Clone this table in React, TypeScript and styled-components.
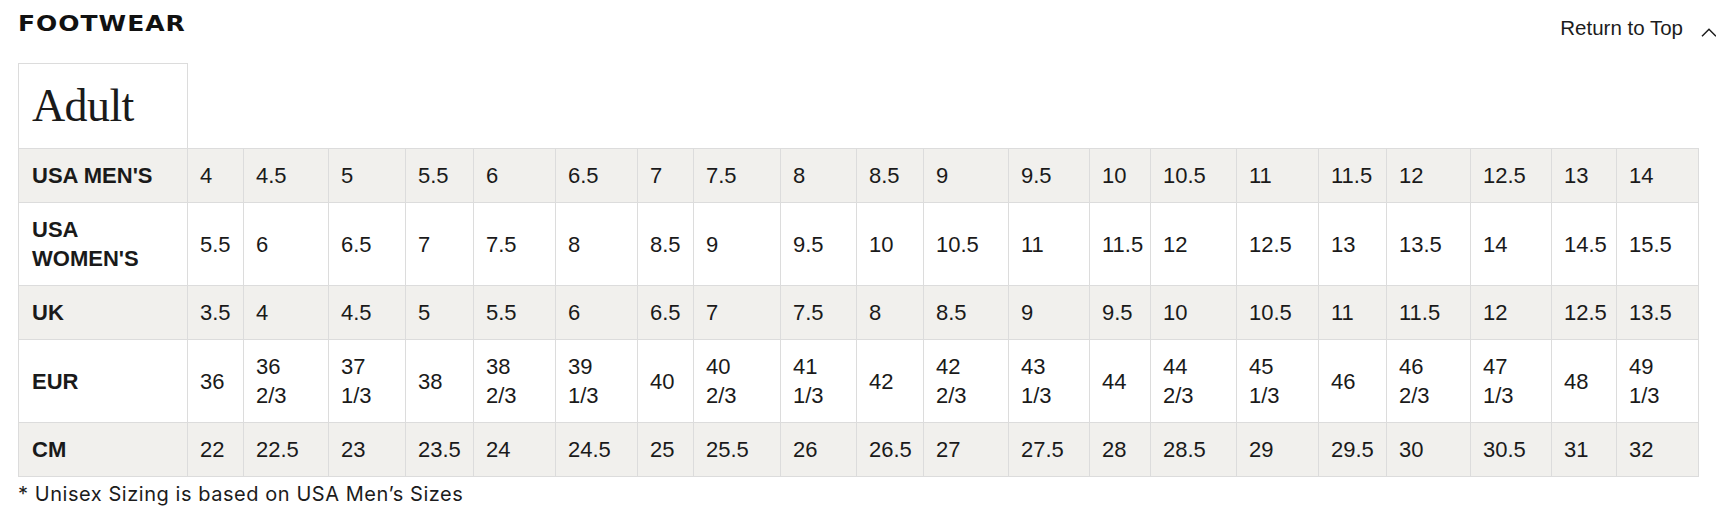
import React from "react";
import styled, { createGlobalStyle } from "styled-components";

const GlobalStyle = createGlobalStyle`
  html, body {
    margin: 0;
    padding: 0;
    background: #ffffff;
    color: #1c1c1c;
    font-family: "Liberation Sans", Arial, sans-serif;
  }
  * { box-sizing: border-box; }
`;

const Page = styled.section`
  padding: 0 18px;
  width: 1716px;
`;

const Header = styled.header`
  display: flex;
  justify-content: space-between;
  align-items: flex-start;
  padding-top: 12px;
  margin-right: -18px;
`;

const Title = styled.h2`
  margin: 0;
  font-family: "DejaVu Sans", sans-serif;
  font-weight: 700;
  font-size: 20.5px;
  line-height: 24px;
  letter-spacing: 0.8px;
  color: #111111;
  transform: scaleX(1.22);
  transform-origin: left center;
`;

const ReturnLink = styled.a`
  display: inline-flex;
  align-items: center;
  gap: 18px;
  margin-top: 4px;
  font-family: "Liberation Sans", Arial, sans-serif;
  font-size: 20.5px;
  line-height: 24px;
  color: #1c1c1c;
  text-decoration: none;
  cursor: pointer;
`;

const Chevron = styled.svg`
  display: block;
  width: 16px;
  height: 9px;
  margin-top: 9px;
  margin-right: -1px;
`;

const Table = styled.table`
  width: 1680px;
  margin-top: 23px;
  border-collapse: collapse;
  table-layout: fixed;
`;

const CaptionCell = styled.th`
  border: 1px solid #dcdcdc;
  padding: 12px 13px;
  text-align: left;
  font-family: "Liberation Serif", "Times New Roman", serif;
  font-weight: 400;
  font-size: 46px;
  line-height: 60px;
  letter-spacing: -0.6px;
  color: #1a1a1a;
  background: #ffffff;
`;

const EmptyCell = styled.td`
  border: none;
  padding: 0;
`;

const Row = styled.tr<{ $shaded: boolean }>`
  background: ${(p) => (p.$shaded ? "#f1f0ed" : "#ffffff")};
`;

const LabelCell = styled.th`
  border: 1px solid #dcdcdc;
  padding: 12px 13px;
  text-align: left;
  font-size: 22px;
  line-height: 29px;
  font-weight: 700;
  color: #1a1a1a;
`;

const ValueCell = styled.td`
  border: 1px solid #dcdcdc;
  padding: 12px 12px;
  text-align: left;
  font-size: 22px;
  line-height: 29px;
  font-weight: 400;
  color: #1a1a1a;
  white-space: nowrap;
`;

const Footnote = styled.p`
  margin: 5px 0 0;
  font-family: "Inter", sans-serif;
  font-size: 20px;
  line-height: 24px;
  letter-spacing: 0.55px;
  color: #1c1c1c;
`;

const colWidths = [
  169, 56, 85, 77, 68, 82, 82, 56, 87, 76, 67, 85, 81, 61, 86, 82, 68, 84, 81,
  65, 82,
];

const rows: { label: string[]; values: string[] }[] = [
  {
    label: ["USA MEN'S"],
    values: "4 4.5 5 5.5 6 6.5 7 7.5 8 8.5 9 9.5 10 10.5 11 11.5 12 12.5 13 14".split(" "),
  },
  {
    label: ["USA", "WOMEN'S"],
    values: "5.5 6 6.5 7 7.5 8 8.5 9 9.5 10 10.5 11 11.5 12 12.5 13 13.5 14 14.5 15.5".split(" "),
  },
  {
    label: ["UK"],
    values: "3.5 4 4.5 5 5.5 6 6.5 7 7.5 8 8.5 9 9.5 10 10.5 11 11.5 12 12.5 13.5".split(" "),
  },
  {
    label: ["EUR"],
    values: [
      "36", "36 2/3", "37 1/3", "38", "38 2/3", "39 1/3", "40", "40 2/3", "41 1/3", "42",
      "42 2/3", "43 1/3", "44", "44 2/3", "45 1/3", "46", "46 2/3", "47 1/3", "48", "49 1/3",
    ],
  },
  {
    label: ["CM"],
    values: "22 22.5 23 23.5 24 24.5 25 25.5 26 26.5 27 27.5 28 28.5 29 29.5 30 30.5 31 32".split(" "),
  },
];

const Lines: React.FC<{ parts: string[] }> = ({ parts }) => (
  <>
    {parts.map((p, i) => (
      <React.Fragment key={i}>
        {i > 0 && <br />}
        {p}
      </React.Fragment>
    ))}
  </>
);

export default function App() {
  return (
    <>
      <GlobalStyle />
      <Page>
        <Header>
          <Title>FOOTWEAR</Title>
          <ReturnLink>
            Return to Top
            <Chevron viewBox="0 0 16 9" fill="none">
              <polyline
                points="1,8.2 8,1.2 15,8.2"
                stroke="#1c1c1c"
                strokeWidth="1.5"
              />
            </Chevron>
          </ReturnLink>
        </Header>
        <Table>
          <colgroup>
            {colWidths.map((w, i) => (
              <col key={i} style={{ width: w }} />
            ))}
          </colgroup>
          <tbody>
            <tr>
              <CaptionCell>Adult</CaptionCell>
              <EmptyCell colSpan={20} />
            </tr>
            {rows.map((r, ri) => (
              <Row key={ri} $shaded={ri % 2 === 0}>
                <LabelCell>
                  <Lines parts={r.label} />
                </LabelCell>
                {r.values.map((v, vi) => (
                  <ValueCell key={vi}>
                    <Lines parts={v.split(" ")} />
                  </ValueCell>
                ))}
              </Row>
            ))}
          </tbody>
        </Table>
        <Footnote>* Unisex Sizing is based on USA Men’s Sizes</Footnote>
      </Page>
    </>
  );
}
